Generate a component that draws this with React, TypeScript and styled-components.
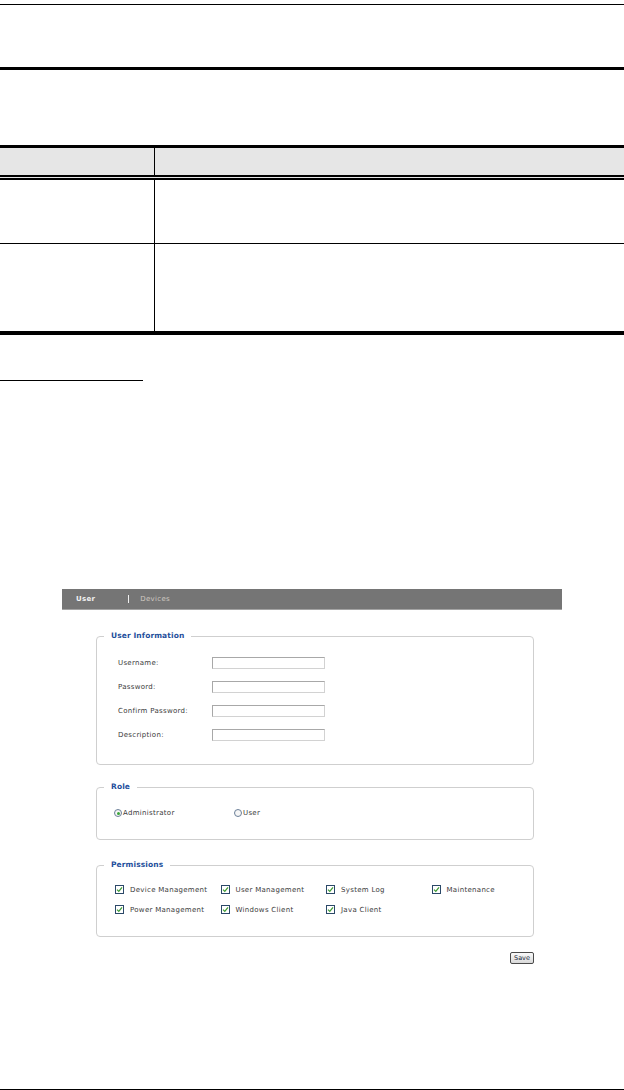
import React from 'react';
import styled, { createGlobalStyle } from 'styled-components';

const GlobalStyle = createGlobalStyle`
  html, body {
    margin: 0;
    padding: 0;
    background: #ffffff;
  }
  body {
    font-family: 'DejaVu Sans', Verdana, sans-serif;
  }
`;

const Page = styled.div`
  display: flex;
  flex-direction: column;
  width: 624px;
  min-height: 1090px;
  box-sizing: border-box;
`;

const HeaderBand = styled.div`
  margin-top: 4px;
  height: 62px;
  border-top: 1px solid #000;
`;

const SectionRule = styled.div`
  height: 3px;
  background: #000;
`;

const Table = styled.div`
  margin-top: 75px;
  border-top: 3px solid #000;
  border-bottom: 4px solid #000;
`;

const TableRow = styled.div<{ height: number; head?: boolean; last?: boolean }>`
  display: grid;
  grid-template-columns: 155px 1fr;
  height: ${({ height }) => height}px;
  background: ${({ head }) => (head ? '#e6e6e6' : '#fff')};
  border-bottom: ${({ head, last }) => (head ? '5px double #000' : last ? 'none' : '1px solid #000')};
  box-sizing: content-box;
`;

const Cell = styled.div<{ first?: boolean }>`
  border-right: ${({ first }) => (first ? '1px solid #000' : 'none')};
`;

const LinkRule = styled.div`
  margin-top: 45px;
  width: 143px;
  border-top: 1px solid #000;
`;

const Figure = styled.div`
  margin: 208px 0 0 62px;
  width: 500px;
`;

const NavBar = styled.div`
  display: flex;
  align-items: center;
  height: 20px;
  background: #757575;
  border-bottom: 1px solid #a3a3a3;
  font-size: 7px;
`;

const NavInner = styled.div`
  display: flex;
  align-items: center;
  padding-left: 14px;
`;

const NavItem = styled.span<{ active?: boolean }>`
  color: ${({ active }) => (active ? '#f2f2f2' : '#cfc9c2')};
  font-weight: ${({ active }) => (active ? 'bold' : 'normal')};
  letter-spacing: 0.3px;
`;

const NavSep = styled.span`
  display: inline-block;
  width: 1px;
  height: 8px;
  background: #f0f0f0;
  margin: 0 11px 0 33px;
`;

const Fieldset = styled.fieldset<{ gap: number }>`
  margin: ${({ gap }) => gap}px 0 0 34px;
  padding: 0;
  width: 438px;
  box-sizing: border-box;
  border: 1px solid #cfcfcf;
  border-radius: 4px;
  min-inline-size: 0;
`;

const Legend = styled.legend`
  margin-left: 7px;
  padding: 0 7px;
  font-size: 7.5px;
  line-height: 10px;
  font-weight: bold;
  color: #1f4f9c;
  letter-spacing: 0.1px;
`;

const FieldBody = styled.div<{ pad: string }>`
  padding: ${({ pad }) => pad};
`;

const InfoGrid = styled.div`
  display: grid;
  grid-template-columns: 94px 113px;
  grid-auto-rows: 12px;
  row-gap: 12px;
  align-items: center;
`;

const Label = styled.span`
  font-size: 7px;
  color: #3a3a3a;
  letter-spacing: 0.3px;
  white-space: nowrap;
`;

const TextInput = styled.div`
  height: 12px;
  box-sizing: border-box;
  border: 1px solid #d2d2d2;
  border-top-color: #a8a8a8;
  border-left-color: #a8a8a8;
  background: #fff;
`;

const RoleRow = styled.div`
  display: grid;
  grid-template-columns: 120px auto;
  height: 10px;
  align-items: center;
`;

const Choice = styled.label`
  display: flex;
  align-items: center;
  gap: 1px;
`;

const Radio = styled.span<{ checked?: boolean }>`
  display: inline-flex;
  align-items: center;
  justify-content: center;
  width: 8px;
  height: 8px;
  box-sizing: border-box;
  border: 1px solid #6b7f98;
  border-radius: 50%;
  background: #f6f6f6;

  &::after {
    content: '';
    display: ${({ checked }) => (checked ? 'block' : 'none')};
    width: 3px;
    height: 3px;
    border-radius: 50%;
    background: #3aa53a;
  }
`;

const PermGrid = styled.div`
  display: grid;
  grid-template-columns: repeat(4, 105.5px);
  grid-auto-rows: 9px;
  row-gap: 11px;
  align-items: center;
`;

const PermItem = styled.label`
  display: flex;
  align-items: center;
  gap: 6px;
`;

const Box = styled.span`
  display: inline-flex;
  align-items: center;
  justify-content: center;
  width: 9px;
  height: 9px;
  box-sizing: border-box;
  border: 1px solid #2b4868;
  background: #fff;
`;

const SaveRow = styled.div`
  display: flex;
  justify-content: flex-end;
  width: 472px;
  margin-top: 15px;
`;

const SaveButton = styled.button`
  width: 24px;
  height: 12px;
  padding: 0;
  box-sizing: border-box;
  border: 1px solid #4a4a4a;
  border-radius: 2px;
  background: linear-gradient(#fafafa, #d9d9d9);
  font-family: 'DejaVu Sans', Verdana, sans-serif;
  font-size: 6.5px;
  color: #1a2a3a;
  line-height: 10px;
`;

const FooterRule = styled.div`
  margin-top: auto;
  height: 1px;
  background: #000;
`;

const CheckMark = () => (
  <svg width="7" height="7" viewBox="0 0 7 7">
    <path d="M1 3.6 L2.8 5.4 L6 1.4" fill="none" stroke="#3f9c35" strokeWidth="1.3" />
  </svg>
);

const userFields = ['Username:', 'Password:', 'Confirm Password:', 'Description:'];

const permissions = [
  'Device Management',
  'User Management',
  'System Log',
  'Maintenance',
  'Power Management',
  'Windows Client',
  'Java Client',
];

export default function App() {
  return (
    <>
      <GlobalStyle />
      <Page>
        <HeaderBand />
        <SectionRule />

        <Table>
          <TableRow height={27} head>
            <Cell first />
            <Cell />
          </TableRow>
          <TableRow height={63}>
            <Cell first />
            <Cell />
          </TableRow>
          <TableRow height={87} last>
            <Cell first />
            <Cell />
          </TableRow>
        </Table>

        <LinkRule />

        <Figure>
          <NavBar>
            <NavInner>
              <NavItem active>User</NavItem>
              <NavSep />
              <NavItem>Devices</NavItem>
            </NavInner>
          </NavBar>

          <Fieldset gap={21}>
            <Legend>User Information</Legend>
            <FieldBody pad="16px 0 23px 21px">
              <InfoGrid>
                {userFields.map((f) => (
                  <React.Fragment key={f}>
                    <Label>{f}</Label>
                    <TextInput />
                  </React.Fragment>
                ))}
              </InfoGrid>
            </FieldBody>
          </Fieldset>

          <Fieldset gap={17}>
            <Legend>Role</Legend>
            <FieldBody pad="16px 0 21px 17px">
              <RoleRow>
                <Choice>
                  <Radio checked />
                  <Label>Administrator</Label>
                </Choice>
                <Choice>
                  <Radio />
                  <Label>User</Label>
                </Choice>
              </RoleRow>
            </FieldBody>
          </Fieldset>

          <Fieldset gap={20}>
            <Legend>Permissions</Legend>
            <FieldBody pad="15px 0 22px 18px">
              <PermGrid>
                {permissions.map((p) => (
                  <PermItem key={p}>
                    <Box>
                      <CheckMark />
                    </Box>
                    <Label>{p}</Label>
                  </PermItem>
                ))}
              </PermGrid>
            </FieldBody>
          </Fieldset>

          <SaveRow>
            <SaveButton>Save</SaveButton>
          </SaveRow>
        </Figure>

        <FooterRule />
      </Page>
    </>
  );
}
